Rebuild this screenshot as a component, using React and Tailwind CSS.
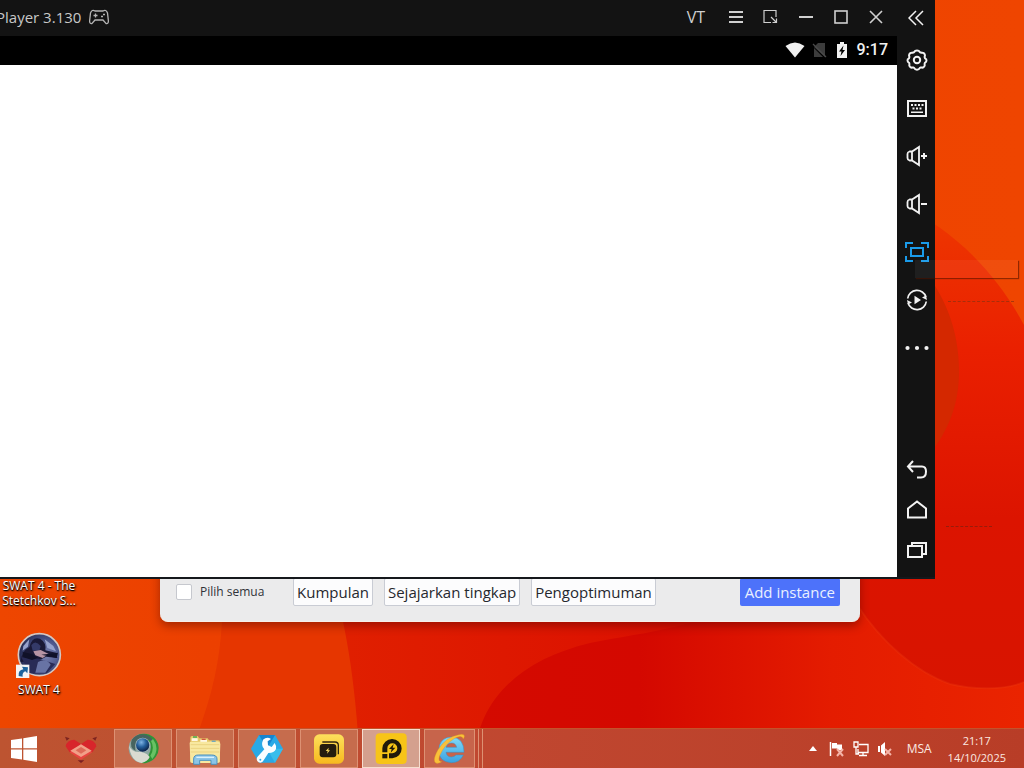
import React from "react";

const uiFont = "font-['Open_Sans','Noto_Sans',sans-serif]";

function Wallpaper() {
  return (
    <svg className="absolute inset-0 h-full w-full" viewBox="0 0 1024 768" preserveAspectRatio="none" aria-hidden="true">
      <defs>
        <linearGradient id="base" x1="0" x2="1" y1="0" y2="0">
          <stop offset="0" stopColor="#ee4600" />
          <stop offset="0.2" stopColor="#ec4000" />
          <stop offset="1" stopColor="#ef4500" />
        </linearGradient>
        <linearGradient id="mid" x1="0" x2="1" y1="0" y2="0">
          <stop offset="0" stopColor="#e02000" />
          <stop offset="0.5" stopColor="#dc1000" />
          <stop offset="1" stopColor="#e01400" />
        </linearGradient>
        <linearGradient id="deep" x1="0" x2="1" y1="0" y2="0">
          <stop offset="0" stopColor="#d40a00" />
          <stop offset="0.3" stopColor="#d40800" />
          <stop offset="0.65" stopColor="#e41c00" />
          <stop offset="1" stopColor="#ea2400" />
        </linearGradient>
        <linearGradient id="side" x1="0" x2="0" y1="0" y2="1">
          <stop offset="0" stopColor="#ee3800" />
          <stop offset="0.3" stopColor="#ea2000" />
          <stop offset="0.65" stopColor="#dc1400" />
          <stop offset="1" stopColor="#d81400" />
        </linearGradient>
      </defs>
      <rect width="1024" height="768" fill="url(#base)" />
      <path d="M222 622C220 660 212 695 199 730V768H400V570H225Z" fill="#e63600" />
      <path d="M330 570C345 620 356 680 360 768H1024V570Z" fill="url(#mid)" />
      <path d="M474 768C474 700 520 660 590 643C650 630 720 630 780 570H1024V768Z" fill="url(#deep)" />
      <path d="M900 205C960 232 1000 280 1024 325V682C1005 690 975 690 950 684C915 672 880 640 858 606L800 500Z" fill="url(#side)" />
      <path d="M920 265C945 295 959 330 959 372C959 405 948 432 928 456Z" fill="#d42800" />
      <path d="M858 606C880 640 915 672 950 684C975 690 1005 690 1024 682" fill="none" stroke="#f03a10" strokeWidth="2" opacity="0.3" />
    </svg>
  );
}

const line = { fill: "none", stroke: "currentColor", strokeWidth: 2 };

function Icon({ children, w = 24, h = 24, ...rest }) {
  return (
    <svg width={w} height={h} viewBox={`0 0 ${w} ${h}`} className="shrink-0" aria-hidden="true" {...rest}>
      {children}
    </svg>
  );
}

const sideTop = [
  ["Settings", <Icon key="i"><g {...line} strokeLinejoin="round"><path d="M9 4.300Q10 2.500 12 2.500Q14 2.500 15 4.300L16.500 4.800Q19 4.500 19.700 6.300Q20.300 7.500 19.600 9L20 10.300Q21.700 11 21.500 12.500Q21.500 14 19.900 14.800L19.600 16Q20.200 18 18.800 19Q17.600 20 15.900 19.400L14.900 19.900Q14 21.700 12 21.700Q10 21.700 9.100 19.900L8.100 19.400Q6.400 20 5.200 19Q3.800 18 4.400 16L4.100 14.800Q2.500 14 2.500 12.500Q2.300 11 4 10.300L4.400 9Q3.700 7.500 4.300 6.300Q5 4.500 7.500 4.800Z" /><circle cx="12" cy="12" r="3.2" /></g></Icon>],
  ["Keyboard", <Icon key="i"><rect x="3" y="5" width="18" height="15" {...line} /><g fill="currentColor"><path d="M6 8h2v2H6zM9.500 8h2v2h-2zM13 8h2v2h-2zM16.500 8h2v2h-2zM7.500 11.500h2v2h-2zM11 11.500h2v2h-2zM14.500 11.500h2v2h-2zM6 15.500h12v1.500H6z" /></g></Icon>],
  ["Volume up", <Icon key="i"><path d="M14 3V21L7 16.500H4.500Q2.500 16 2.500 14V10Q2.500 8 4.500 7.500H7ZM7 7.500V16.500" {...line} strokeWidth="1.800" /><path d="M16 12H22M19 9V15" {...line} /></Icon>],
  ["Volume down", <Icon key="i"><path d="M14 3V21L7 16.500H4.500Q2.500 16 2.500 14V10Q2.500 8 4.500 7.500H7ZM7 7.500V16.500" {...line} strokeWidth="1.800" /><path d="M16 12H22" {...line} /></Icon>],
  ["Full screen", <Icon key="i" color="#1a9bea"><path d="M1 8V3H8M16 3H23V8M23 16V21H16M8 21H1V16" {...line} /><rect x="6" y="8" width="12" height="8" {...line} /></Icon>],
  ["Sync operations", <Icon key="i"><path d="M3 15A9.400 9.400 0 0 0 21.300 13.500M21 9A9.400 9.400 0 0 0 2.700 10.500" {...line} strokeWidth="1.700" /><path d="M2 12L7 14.500L3 16.500ZM22 12L17 9.500L21 7.500ZM9.500 7.800L16 12L9.500 16.200Z" fill="currentColor" /></Icon>],
  ["More", <Icon key="i" w={26}><g fill="currentColor"><circle cx="3.500" cy="12" r="2.100" /><circle cx="13" cy="12" r="2.100" /><circle cx="22.500" cy="12" r="2.100" /></g></Icon>],
];

const sideBottom = [
  ["Back", <Icon key="i"><path d="M8 3L3 8.500L8 14M3 8.500H17Q21 8.500 21 13.500Q21 19.500 16 19.500H12" {...line} /></Icon>],
  ["Home", <Icon key="i"><path d="M3 10.500L12 3.500L21 10.500V19.500H3Z" {...line} /></Icon>],
  ["Recent apps", <Icon key="i"><path d="M3 8H17V19H3ZM7 8V5H21V16H17" {...line} /></Icon>],
];

const windowButtons = [
  ["Menu", <Icon key="i" w={16} h={14}><path d="M1 2H15M1 7H15M1 12H15" {...line} /></Icon>],
  ["Mini mode", <Icon key="i" w={16} h={16}><path d="M8 13.500H1V1.500H13V8M8 8L13 13M9.500 13.500H13.500V9.500" {...line} strokeWidth="1.200" /></Icon>],
  ["Minimize", <Icon key="i" w={16} h={16}><path d="M1 8H15" {...line} /></Icon>],
  ["Maximize", <Icon key="i" w={16} h={16}><rect x="2" y="2" width="12" height="12" {...line} strokeWidth="1.600" /></Icon>],
  ["Close", <Icon key="i" w={16} h={16}><path d="M2 2L14 14M14 2L2 14" {...line} strokeWidth="1.600" /></Icon>],
];

function Player() {
  return (
    <section aria-label="Player" className="absolute top-0 right-[89px] bottom-[149px] left-0 flex border-b-2 border-[#15181c] bg-[#131313] text-[#e6e6e6]">
      <div className="flex min-w-0 flex-1 flex-col">
        <header className="flex h-9 items-center overflow-hidden pr-1 pb-0.5">
          <span className="-ml-1 text-[15px] leading-5 whitespace-nowrap text-[#c8c8c8]">Player 3.130</span>
          <span className="ml-2 text-[#b4b4b4]">
            <Icon w={20} h={16}>
              <path d="M6 2H14Q17 0 18.500 4L19.400 12Q19.400 15 17 14.500L14 11H6L3 14.500Q0.600 15 0.600 12L1.500 4Q3 0 6 2Z" {...line} strokeWidth="1.300" />
              <path d="M6.500 4.500V8.500M4.500 6.500H8.500M12 7.500H14M14 5.500H16" {...line} strokeWidth="1.300" />
            </Icon>
          </span>
          <div className="ml-auto flex h-8 text-[#d0d0d0]">
            <button className="w-11 text-base leading-5">VT</button>
            {windowButtons.map(([name, icon]) => (
              <button key={name} aria-label={name} className="flex w-[35px] items-center justify-center">{icon}</button>
            ))}
          </div>
        </header>
        <div className="flex h-[29px] items-center justify-end gap-2 bg-black pr-[9px] pb-0.5 text-[#f0f0f0]">
          <div className="flex items-center gap-[7px]">
            <Icon w={20} h={16}><path d="M0.500 4Q10 -3 19.500 4L10 15.500Z" fill="currentColor" /></Icon>
            <Icon w={16} h={16}><path d="M6 1H13V15L2 5ZM2 6V15H11Z" fill="#3c3c3c" /><path d="M1 2L14 15" stroke="#4a4a4a" strokeWidth="1.300" /></Icon>
            <Icon w={14} h={18}><path d="M5 1H9V3H12V17H2V3H5Z" fill="currentColor" /><path d="M8.500 4.500L4 10.500H6.500L5.500 15L10 9H7.500Z" fill="#000" /></Icon>
          </div>
          <span className="font-[Roboto,sans-serif] text-base leading-5 font-medium">9:17</span>
        </div>
        <div className="flex-1 bg-white" />
      </div>
      <nav aria-label="Player tools" className="flex w-[38px] flex-col pb-[7px] pl-0.5 text-[#f2f2f2]">
        <button aria-label="Collapse" className="flex h-9 items-center justify-center">
          <Icon w={18} h={18}><path d="M8 2L1 9L8 16M15 2L8 9L15 16" {...line} strokeWidth="1.500" /></Icon>
        </button>
        {sideTop.map(([name, icon]) => (
          <button key={name} aria-label={name} className="flex h-12 items-center justify-center">{icon}</button>
        ))}
        <div className="flex-1" />
        {sideBottom.map(([name, icon]) => (
          <button key={name} aria-label={name} className="flex h-10 items-center justify-center">{icon}</button>
        ))}
      </nav>
    </section>
  );
}

function Manager() {
  const btn = "h-7 rounded-xs border border-[#c9ccd4] bg-[#fcfcfd] px-[3px] text-[15px] leading-5 whitespace-nowrap text-[#26282e]";
  return (
    <section aria-label="Instances" className="absolute right-[164px] bottom-[106px] left-40 flex items-center rounded-b-lg border-b border-[#f6efe8] bg-[#ebebec] px-4 pt-4 pb-[15px] shadow-[0_4px_10px_rgba(60,0,0,0.4)]">
      <input id="all" type="checkbox" className="size-4 appearance-none rounded-xs border border-[#c6c8ce] bg-white" />
      <label htmlFor="all" className="ml-2 w-[93px] text-[12px] leading-4 text-[#303238]">Pilih semua</label>
      <div className="flex gap-[11px]">
        <button className={btn}>Kumpulan</button>
        <button className={btn}>Sejajarkan tingkap</button>
        <button className={btn}>Pengoptimuman</button>
      </div>
      <button className="mr-1 ml-auto h-7 rounded-xs bg-[#4d72fa] px-[5px] text-[15px] leading-5 whitespace-nowrap text-[#eaf0ff]">Add instance</button>
    </section>
  );
}

function DesktopIcons() {
  const label = "text-center text-[12px] leading-[15px] text-white [text-shadow:1px_1px_2px_#000,0_1px_1px_#000]";
  return (
    <div className="absolute bottom-[31px] left-0 flex w-[78px] flex-col items-center">
      <span className={label}>SWAT 4 - The<br />Stetchkov S...</span>
      <svg width="46" height="46" viewBox="0 0 138 138" className="mt-6 mb-1" aria-hidden="true">
        <defs>
          <radialGradient id="swat" cx="0.65" cy="0.5" r="0.7">
            <stop offset="0" stopColor="#7d86b4" />
            <stop offset="0.5" stopColor="#4a5488" />
            <stop offset="1" stopColor="#1c2044" />
          </radialGradient>
        </defs>
        <circle cx="70" cy="68" r="63" fill="url(#swat)" stroke="#d4c8c4" strokeWidth="5" />
        <path d="M40 45Q48 12 72 20Q92 32 88 55L120 62L124 78L90 74L76 82L50 88L14 90Q14 60 40 45Z" fill="#1a1936" />
        <path d="M46 40Q58 22 74 42L70 56H50Z" fill="#343a68" />
        <path d="M52 58L74 54L98 66L80 78L58 70Z" fill="#b694a4" />
        <path d="M16 76L60 78L118 96L92 124H40Z" fill="#292b56" />
        <path d="M66 90Q90 76 104 98L88 122H58Z" fill="#6873a4" />
        <path d="M20 60L48 66L66 78L48 84L22 76ZM76 68L126 62L122 78Z" fill="#101128" />
        <path d="M86 22L112 42L120 58L94 48ZM22 42L40 22L36 44L20 56Z" fill="#96a2cc" />
        <rect x="0" y="98" width="40" height="40" fill="#f4f4f4" />
        <path d="M8 132Q6 114 22 112L18 104L36 106L34 124L28 118Q18 122 20 134Z" fill="#1c639d" />
      </svg>
      <span className={label}>SWAT 4</span>
    </div>
  );
}

function AppIcon({ children }) {
  return <svg width="32" height="32" viewBox="0 0 96 96" aria-hidden="true">{children}</svg>;
}

const apps = [
  ["Globe", <AppIcon key="i">
    <defs><radialGradient id="ball" cx="0.4" cy="0.3" r="0.7"><stop offset="0" stopColor="#7fb4e4" /><stop offset="0.5" stopColor="#24609c" /><stop offset="1" stopColor="#0c2348" /></radialGradient></defs>
    <circle cx="49" cy="46" r="44" fill="#8fa8a2" />
    <path d="M49 2A44 44 0 0 1 60 89Q50 92 44 90Q78 62 70 30Q54 8 24 12Q35 2 49 2Z" fill="#2f9436" />
    <path d="M14 20Q30 0 58 5Q76 12 78 26Q54 12 30 28Q22 40 26 54Q6 44 14 20Z" fill="#47645f" />
    <path d="M6 36Q12 60 44 57Q62 62 68 72Q62 86 44 90Q10 84 6 36Z" fill="#dadbd1" />
    <path d="M72 24Q84 46 70 68L76 78Q100 48 78 18Z" fill="#68c264" />
    <circle cx="47" cy="36" r="22" fill="#a9bcc6" /><circle cx="47" cy="36" r="20" fill="url(#ball)" />
  </AppIcon>],
  ["File Explorer", <AppIcon key="i">
    <path d="M4 14Q4 9 9 9H26L31 16H56L60 22H88Q93 22 93 27V88H4Z" fill="#e6c968" />
    <path d="M8 16H26V24H8ZM34 20H54V27H34ZM64 26H88V34H64Z" fill="#fff7e4" />
    <path d="M12 10H24V14H12Z" fill="#36a552" /><path d="M38 17H50V21H38Z" fill="#d4573d" /><path d="M68 23H80V27H68Z" fill="#4696c8" />
    <path d="M2 30Q2 26 7 26H88Q94 27 94 33L92 84Q92 90 86 90H10Q4 90 4 84Z" fill="#f8e8a0" />
    <path d="M5 35H91M5 46H91M5 57H91" stroke="#ebd380" strokeWidth="3" />
    <path d="M14 94V78Q14 66 28 66H68Q84 66 84 78V94H66V82H32V94Z" fill="#8bc5e8" stroke="#4b91bd" strokeWidth="3" />
    <path d="M22 73H75" stroke="#d8f0fc" strokeWidth="4" />
  </AppIcon>],
  ["Repair tool", <AppIcon key="i">
    <path d="M0 47L24 6H72L96 47L72 89H24Z" fill="#29a9e6" /><path d="M24 6H72L48 47Z" fill="#1684cf" /><path d="M96 47L72 89L48 47Z" fill="#38bdec" />
    <path d="M36 20Q29 38 40 49L19 72Q14 82 23 88Q33 92 38 82L52 60Q70 60 75 48Q77 38 71 30L62 42L51 37L50 25L60 18Q48 10 36 20Z" fill="#fafdff" /><circle cx="28" cy="80" r="3" fill="#29a9e6" />
  </AppIcon>],
  ["Multi player", <AppIcon key="i">
    <defs><linearGradient id="gold" x1="0" y1="0" x2="0" y2="1"><stop offset="0" stopColor="#fde05c" /><stop offset="1" stopColor="#f7b91e" /></linearGradient></defs>
    <rect x="3" y="4" width="90" height="88" rx="16" fill="url(#gold)" />
    <path d="M28 27H66Q76 27 76 37V64" fill="none" stroke="#302510" strokeWidth="4" />
    <rect x="20" y="33" width="50" height="40" rx="9" fill="#241c0e" />
    <path d="M47 44L38 54H44L42 62L51 52H46Z" fill="#f8d960" />
  </AppIcon>],
  ["Player", <AppIcon key="i">
    <rect x="2" y="1" width="93" height="92" rx="12" fill="#f7c417" />
    <path d="M22 58V46A29 29 0 1 1 52 76H42V61H52A15 15 0 1 0 37 46V58Z" fill="#20190a" />
    <path d="M22 63H37V76H22Z" fill="#20190a" />
    <path d="M56 33L42 48H50L47 59L61 44H53Z" fill="#20190a" />
  </AppIcon>],
];

function Taskbar() {
  const task = "flex w-[58px] items-center justify-center border";
  return (
    <footer className="relative flex h-10 items-stretch justify-between border-t border-[#c4532b] bg-linear-to-r from-[#bd5431] via-[#c04730] to-[#b83d27] text-[#fbe9e2]">
      <div className="flex gap-1">
        <button aria-label="Start" className="flex w-12 items-center justify-center">
          <Icon w={28} h={28}><path d="M1 5L12 3.400V13.300H1ZM13.300 3.200L27 1V13.300H13.300ZM1 14.600H12V24.500L1 23ZM13.300 14.600H27V27L13.300 24.800Z" fill="#fff" /></Icon>
        </button>
        <button aria-label="Fox" className="flex w-[58px] items-center justify-center">
          <AppIcon>
            <path d="M0 11L14 16L5 23ZM96 11L82 16L91 23Z" fill="#7e2520" />
            <path d="M2 40Q6 20 28 20L48 33L68 20Q90 20 94 40L82 58L48 40L14 58Z" fill="#d8252b" />
            <path d="M14 58L48 34L82 58L48 80Z" fill="#e84540" />
            <path d="M16 53L48 34L80 53L48 72Z" fill="#f1a088" /><path d="M32 52L48 42L64 52L48 62Z" fill="#de6a58" />
            <path d="M38 82H58L48 90Z" fill="#7b1d20" />
          </AppIcon>
        </button>
        {apps.map(([name, icon], i) => (
          <button key={name} aria-label={name} className={`${task} ${i === 4 ? "border-[#f6ddcf] bg-[#d4a08e]" : "border-[#dd9173] bg-[#c66c4d]"}`}>{icon}</button>
        ))}
        <div className="flex gap-0.5">
          <button aria-label="Internet Explorer" className="flex w-[51px] items-center justify-center border border-[#dd9173] bg-[#c7644b]">
            <AppIcon>
              <defs><linearGradient id="ie" x1="0" y1="0" x2="0" y2="1"><stop offset="0" stopColor="#81daf8" /><stop offset="1" stopColor="#3ba2e0" /></linearGradient></defs>
              <path d="M90 58H36Q38 72 52 72Q61 72 66 66H88Q78 89 52 89Q15 87 14 52Q16 13 53 12Q90 15 90 58ZM36 43H68Q65 30 53 30Q39 30 36 43Z" fill="url(#ie)" stroke="#3a8cc0" strokeWidth="1.500" />
              <path d="M88 18Q99 0 74 5Q36 12 12 50Q-6 82 5 90Q11 94 24 86Q10 86 17 68Q30 36 62 16Q84 4 88 18Z" fill="#f9c03a" stroke="#dc8b1c" strokeWidth="1" />
            </AppIcon>
          </button>
          <span className="w-0.5 border-r border-[#dd9173]" />
          <span className="w-0.5 border-r border-[#dd9173]" />
        </div>
      </div>
      <div className="flex items-center pr-[18px] text-[12px] leading-[17px]">
        <button aria-label="Show hidden icons" className="mr-3"><Icon w={8} h={5}><path d="M0 5L4 0L8 5Z" fill="#fff" /></Icon></button>
        <div className="flex gap-2">
          <Icon w={16} h={16}><path d="M1.500 1V15" stroke="#fff" strokeWidth="1.500" /><path d="M3 2H8V3.500H13V9H8V7.500H3Z" fill="#fff" /><path d="M8 8L14 15M14 8L8 15" stroke="#f5b4a8" strokeWidth="2" /></Icon>
          <Icon w={16} h={16}><path d="M6 3.500H15V11.500H5V8M10 11.500V14M6 14.500H14M1 1H5V6H1ZM3 6V13H6" fill="none" stroke="#fff" strokeWidth="1.300" /></Icon>
          <Icon w={16} h={16}><path d="M1 5H3V11H1ZM4 4.500L8 1V15L4 11.500Z" fill="#fff" /><path d="M8 8L14 14M14 8L8 14" stroke="#f5b4a8" strokeWidth="2" /></Icon>
        </div>
        <span className="ml-3.5">MSA</span>
        <time className="ml-4 text-center text-[11px]">21:17<br />14/10/2025</time>
      </div>
    </footer>
  );
}

export default function App() {
  return (
    <div className={`relative flex min-h-screen flex-col overflow-hidden ${uiFont}`}>
      <Wallpaper />
      <main className="relative flex-1">
        <DesktopIcons />
        <Manager />
        <Player />
        <div className="absolute top-[260px] right-1.5 h-[18px] w-[103px] bg-white/5 shadow-[1px_1px_1px_rgba(80,20,0,0.6)]" />
        <div className="absolute top-[301px] right-2.5 w-[66px] border-t border-dashed border-[#8a3010]/70" />
        <div className="absolute top-[526px] right-8 w-[46px] border-t border-dashed border-[#7a2010]/70" />
      </main>
      <Taskbar />
    </div>
  );
}
